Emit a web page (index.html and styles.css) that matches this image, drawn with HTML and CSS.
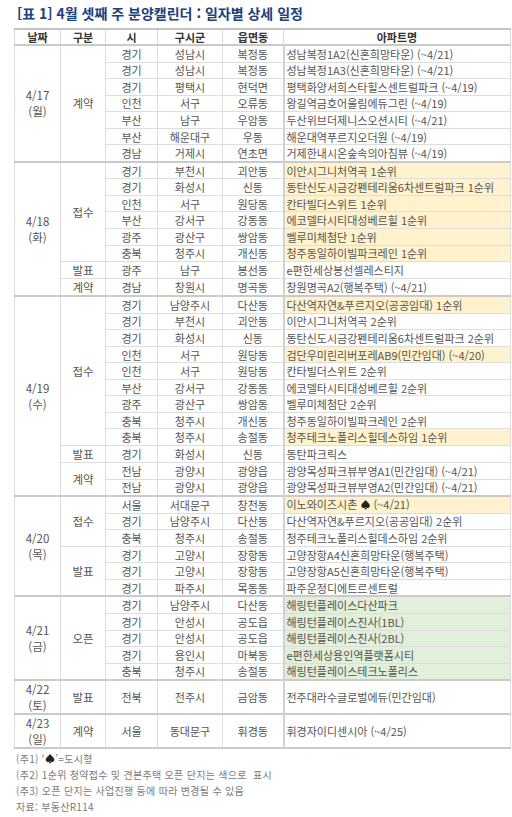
FILE: index.html
```html
<!DOCTYPE html>
<html lang="ko">
<head>
<meta charset="utf-8">
<link rel="stylesheet" href="styles.css">
</head>
<body>
<div class="page">
  <h1 class="title">[표 1] 4월 셋째 주 분양캘린더 : 일자별 상세 일정</h1>
  <table class="cal">
    <colgroup>
      <col class="c-date"><col class="c-type"><col class="c-si"><col class="c-gu"><col class="c-dong"><col class="c-apt">
    </colgroup>
    <thead>
      <tr><th>날짜</th><th>구분</th><th>시</th><th>구시군</th><th>읍면동</th><th>아파트명</th></tr>
    </thead>
    <tbody class="grp">
      <tr><td class="date" rowspan="7">4/17<br>(월)</td><td class="type" rowspan="7">계약</td><td>경기</td><td>성남시</td><td>복정동</td><td class="apt">성남복정1A2(신혼희망타운) (~4/21)</td></tr>
      <tr><td>경기</td><td>성남시</td><td>복정동</td><td class="apt">성남복정1A3(신혼희망타운) (~4/21)</td></tr>
      <tr><td>경기</td><td>평택시</td><td>현덕면</td><td class="apt">평택화양서희스타힐스센트럴파크 (~4/19)</td></tr>
      <tr><td>인천</td><td>서구</td><td>오류동</td><td class="apt">왕길역금호어울림에듀그린 (~4/19)</td></tr>
      <tr><td>부산</td><td>남구</td><td>우암동</td><td class="apt">두산위브더제니스오션시티 (~4/21)</td></tr>
      <tr><td>부산</td><td>해운대구</td><td>우동</td><td class="apt">해운대역푸르지오더원 (~4/19)</td></tr>
      <tr><td>경남</td><td>거제시</td><td>연초면</td><td class="apt">거제한내시온숲속의아침뷰 (~4/19)</td></tr>
    </tbody>
    <tbody class="grp">
      <tr><td class="date" rowspan="8">4/18<br>(화)</td><td class="type" rowspan="6">접수</td><td>경기</td><td>부천시</td><td>괴안동</td><td class="apt y">이안시그니처역곡 1순위</td></tr>
      <tr><td>경기</td><td>화성시</td><td>신동</td><td class="apt y">동탄신도시금강펜테리움6차센트럴파크 1순위</td></tr>
      <tr><td>인천</td><td>서구</td><td>원당동</td><td class="apt y">칸타빌더스위트 1순위</td></tr>
      <tr><td>부산</td><td>강서구</td><td>강동동</td><td class="apt y">에코델타시티대성베르힐 1순위</td></tr>
      <tr><td>광주</td><td>광산구</td><td>쌍암동</td><td class="apt y">벨루미체첨단 1순위</td></tr>
      <tr><td>충북</td><td>청주시</td><td>개신동</td><td class="apt y">청주동일하이빌파크레인 1순위</td></tr>
      <tr><td class="type">발표</td><td>광주</td><td>남구</td><td>봉선동</td><td class="apt">e편한세상봉선셀레스티지</td></tr>
      <tr><td class="type">계약</td><td>경남</td><td>창원시</td><td>명곡동</td><td class="apt">창원명곡A2(행복주택) (~4/21)</td></tr>
    </tbody>
    <tbody class="grp">
      <tr><td class="date" rowspan="12">4/19<br>(수)</td><td class="type" rowspan="9">접수</td><td>경기</td><td>남양주시</td><td>다산동</td><td class="apt y">다산역자연&amp;푸르지오(공공임대) 1순위</td></tr>
      <tr><td>경기</td><td>부천시</td><td>괴안동</td><td class="apt">이안시그니처역곡 2순위</td></tr>
      <tr><td>경기</td><td>화성시</td><td>신동</td><td class="apt">동탄신도시금강펜테리움6차센트럴파크 2순위</td></tr>
      <tr><td>인천</td><td>서구</td><td>원당동</td><td class="apt y">검단우미린리버포레AB9(민간임대) (~4/20)</td></tr>
      <tr><td>인천</td><td>서구</td><td>원당동</td><td class="apt">칸타빌더스위트 2순위</td></tr>
      <tr><td>부산</td><td>강서구</td><td>강동동</td><td class="apt">에코델타시티대성베르힐 2순위</td></tr>
      <tr><td>광주</td><td>광산구</td><td>쌍암동</td><td class="apt">벨루미체첨단 2순위</td></tr>
      <tr><td>충북</td><td>청주시</td><td>개신동</td><td class="apt">청주동일하이빌파크레인 2순위</td></tr>
      <tr><td>충북</td><td>청주시</td><td>송절동</td><td class="apt y">청주테크노폴리스힐데스하임 1순위</td></tr>
      <tr><td class="type">발표</td><td>경기</td><td>화성시</td><td>신동</td><td class="apt">동탄파크릭스</td></tr>
      <tr><td class="type" rowspan="2">계약</td><td>전남</td><td>광양시</td><td>광양읍</td><td class="apt">광양목성파크뷰부영A1(민간임대) (~4/21)</td></tr>
      <tr><td>전남</td><td>광양시</td><td>광양읍</td><td class="apt">광양목성파크뷰부영A2(민간임대) (~4/21)</td></tr>
    </tbody>
    <tbody class="grp">
      <tr><td class="date" rowspan="6">4/20<br>(목)</td><td class="type" rowspan="3">접수</td><td>서울</td><td>서대문구</td><td>창천동</td><td class="apt y">이노와이즈시촌 <span class="spade">♠</span> (~4/21)</td></tr>
      <tr><td>경기</td><td>남양주시</td><td>다산동</td><td class="apt">다산역자연&amp;푸르지오(공공임대) 2순위</td></tr>
      <tr><td>충북</td><td>청주시</td><td>송절동</td><td class="apt">청주테크노폴리스힐데스하임 2순위</td></tr>
      <tr><td class="type" rowspan="3">발표</td><td>경기</td><td>고양시</td><td>장항동</td><td class="apt">고양장항A4신혼희망타운(행복주택)</td></tr>
      <tr><td>경기</td><td>고양시</td><td>장항동</td><td class="apt">고양장항A5신혼희망타운(행복주택)</td></tr>
      <tr><td>경기</td><td>파주시</td><td>목동동</td><td class="apt">파주운정디에트르센트럴</td></tr>
    </tbody>
    <tbody class="grp">
      <tr><td class="date" rowspan="5">4/21<br>(금)</td><td class="type" rowspan="5">오픈</td><td>경기</td><td>남양주시</td><td>다산동</td><td class="apt g">해링턴플레이스다산파크</td></tr>
      <tr><td>경기</td><td>안성시</td><td>공도읍</td><td class="apt g">해링턴플레이스진사(1BL)</td></tr>
      <tr><td>경기</td><td>안성시</td><td>공도읍</td><td class="apt g">해링턴플레이스진사(2BL)</td></tr>
      <tr><td>경기</td><td>용인시</td><td>마북동</td><td class="apt g">e편한세상용인역플랫폼시티</td></tr>
      <tr><td>충북</td><td>청주시</td><td>송절동</td><td class="apt g">해링턴플레이스테크노폴리스</td></tr>
    </tbody>
    <tbody class="grp">
      <tr class="tall"><td class="date">4/22<br>(토)</td><td class="type">발표</td><td>전북</td><td>전주시</td><td>금암동</td><td class="apt">전주대라수글로벌에듀(민간임대)</td></tr>
    </tbody>
    <tbody class="grp last">
      <tr class="tall"><td class="date">4/23<br>(일)</td><td class="type">계약</td><td>서울</td><td>동대문구</td><td>휘경동</td><td class="apt">휘경자이디센시아 (~4/25)</td></tr>
    </tbody>
  </table>
  <ul class="notes">
    <li>(주1) ‘<span class="spade">♠</span>’=도시형</li>
    <li>(주2) 1순위 청약접수 및 견본주택 오픈 단지는 색으로&nbsp; 표시</li>
    <li>(주3) 오픈 단지는 사업진행 등에 따라 변경될 수 있음</li>
    <li>자료: 부동산R114</li>
  </ul>
</div>
</body>
</html>
```
FILE: styles.css
```css
html, body {
  margin: 0;
  padding: 0;
  background: #ffffff;
}
.page {
  padding: 0 1px 0 14px;
  font-family: "Noto Sans CJK KR", "Noto Sans", sans-serif;
  color: #555;
}
.title {
  margin: 0 0 0 3px;
  height: 28px;
  font-size: 14px;
  line-height: 26px;
  font-weight: 700;
  color: #20407e;
  letter-spacing: 0;
}
.cal {
  width: 497px;
  border-collapse: collapse;
  table-layout: fixed;
  font-size: 11px;
  border-left: 1px solid #d6d6d6;
  border-right: 1px solid #d6d6d6;
}
.c-date { width: 46px; }
.c-type { width: 45px; }
.c-si { width: 52px; }
.c-gu { width: 65px; }
.c-dong { width: 61px; }
.c-apt { width: auto; }
.cal th {
  height: 14px;
  padding: 0;
  font-weight: 600;
  color: #333;
  text-align: center;
  line-height: 14px;
  border: 1px solid #dadada;
  border-top: 2px solid #c4c4c4;
  border-bottom: 1px solid #c4c4c4;
}
.cal td {
  height: 15.55px;
  padding: 0;
  line-height: 14px;
  text-align: center;
  border: 1px solid #dedede;
  white-space: nowrap;
  overflow: hidden;
}
.cal tbody.grp {
  border-top: 2px solid #cacaca;
}
.cal tbody.last {
  border-bottom: 2px solid #cacaca;
}
.cal td.apt {
  text-align: left;
  padding-left: 2px;
  border-left: 2px solid #d2d2d2;
}
.cal td.date, .cal td.type {
  font-size: 11.5px;
  line-height: 16px;
}
.cal tr.tall td {
  height: 31px;
}
.cal td.y { background: #fff2cc; }
.cal td.g { background: #e2efda; }
.spade {
  color: #222;
  font-size: 10px;
}
.notes {
  list-style: none;
  margin: 2px 0 0 2px;
  padding: 0;
  font-size: 10px;
  line-height: 16px;
  color: #7a7a7a;
  letter-spacing: 0.3px;
}
.notes li:last-child { line-height: 15px; }
```
